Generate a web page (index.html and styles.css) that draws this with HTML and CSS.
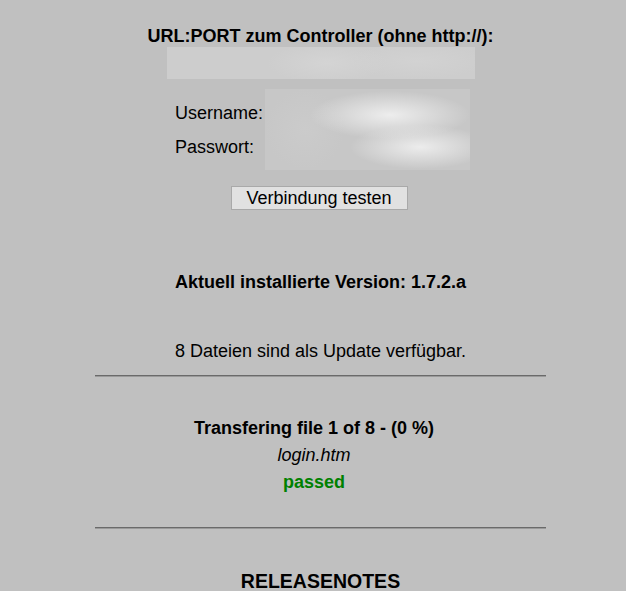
FILE: index.html
```html
<!DOCTYPE html>
<html lang="de">
<head>
<meta charset="utf-8">
<title>Update</title>
<link rel="stylesheet" href="styles.css">
</head>
<body>
<main class="page">
  <section class="conn">
    <div class="title">URL:PORT zum Controller (ohne http://):</div>
    <div class="url-field"></div>
    <div class="creds">
      <div class="labels">
        <div class="label">Username:</div>
        <div class="label">Passwort:</div>
      </div>
      <div class="cred-fields"></div>
    </div>
    <button class="btn" type="button">Verbindung testen</button>
  </section>
  <div class="version">Aktuell installierte Version: 1.7.2.a</div>
  <div class="files">8 Dateien sind als Update verfügbar.</div>
  <hr class="rule">
  <section class="transfer">
    <div class="t-title">Transfering file 1 of 8 - (0 %)</div>
    <div class="t-file">login.htm</div>
    <div class="t-status">passed</div>
  </section>
  <hr class="rule">
  <h3 class="notes">RELEASENOTES</h3>
</main>
</body>
</html>
```
FILE: styles.css
```css
html, body {
  margin: 0;
  padding: 0;
  background: #c0c0c0;
}
body {
  font-family: "Liberation Sans", Arial, sans-serif;
  font-size: 18px;
  color: #000;
}
.page {
  width: 451px;
  margin-left: 95px;
  padding-top: 27px;
  text-align: center;
}
.conn {
  display: flex;
  flex-direction: column;
  align-items: center;
}
.title {
  font-weight: bold;
  line-height: 18px;
}
.url-field {
  width: 308px;
  height: 32px;
  margin-top: 2px;
  background:
    radial-gradient(ellipse 60px 20px at 160px 16px, #d4d4d4, rgba(212,212,212,0)),
    radial-gradient(ellipse 70px 18px at 250px 14px, #d2d2d2, rgba(210,210,210,0)),
    #cdcdcd;
}
.creds {
  display: flex;
  align-self: flex-start;
  margin-top: 10px;
  margin-left: 80px;
}
.labels {
  display: flex;
  flex-direction: column;
  padding-top: 15px;
  gap: 16px;
  text-align: left;
  width: 90px;
}
.label {
  line-height: 18px;
}
.cred-fields {
  width: 205px;
  height: 81px;
  background:
    radial-gradient(ellipse 80px 24px at 125px 26px, #ededed, rgba(237,237,237,0)),
    radial-gradient(ellipse 70px 22px at 155px 58px, #ececec, rgba(236,236,236,0)),
    radial-gradient(ellipse 40px 40px at 40px 40px, #cbcbcb, rgba(203,203,203,0)),
    #c7c7c7;
}
.btn {
  margin-top: 16px;
  width: 177px;
  height: 24px;
  padding: 0;
  font-family: "Liberation Sans", Arial, sans-serif;
  font-size: 18px;
  line-height: 20px;
  color: #000;
  background: #e1e1e1;
  border: 1px solid #a9a9a9;
  border-radius: 0;
  margin-left: -3px;
}
.version {
  font-weight: bold;
  line-height: 18px;
  margin-top: 63px;
}
.files {
  line-height: 18px;
  margin-top: 51px;
}
.rule {
  margin: 15px 0 0 0;
  border: 0;
  border-top: 1px solid #6a6a6a;
  border-bottom: 1px solid #9a9a9a;
  height: 0;
}
.transfer {
  padding-top: 42px;
  padding-bottom: 36px;
  padding-right: 13px;
}
.t-title {
  font-weight: bold;
  line-height: 18px;
}
.t-file {
  font-style: italic;
  line-height: 18px;
  margin-top: 9px;
}
.t-status {
  font-weight: bold;
  color: #008000;
  line-height: 18px;
  margin-top: 9px;
}
.transfer + .rule {
  margin-top: 0;
}
.notes {
  font-size: 19.5px;
  font-weight: bold;
  line-height: 22px;
  margin: 41px 0 0 0;
}
```
